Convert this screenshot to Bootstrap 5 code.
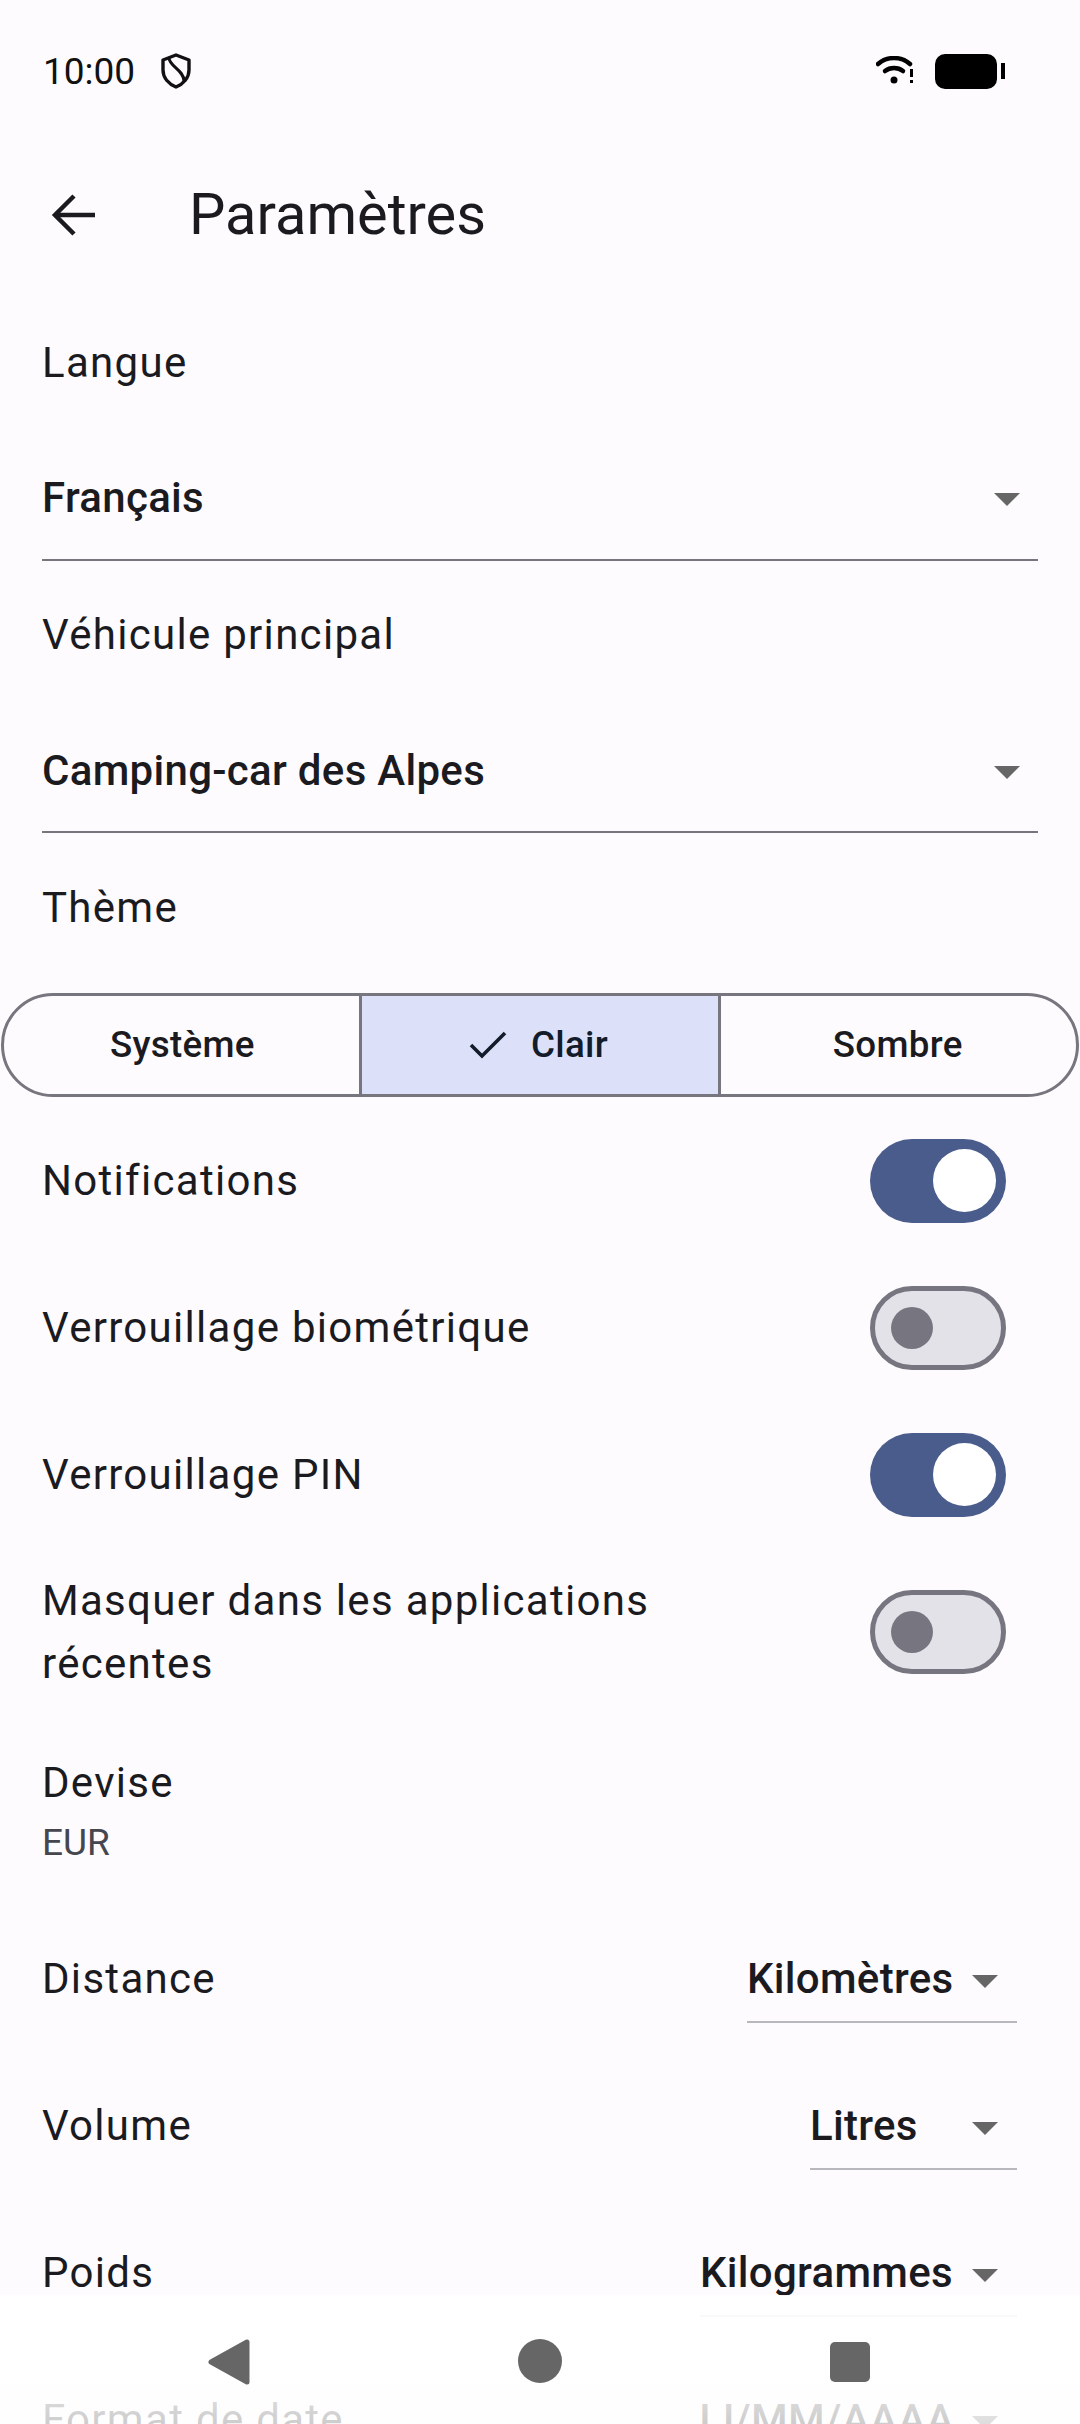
<!DOCTYPE html>
<html lang="fr">
<head>
  <meta charset="UTF-8">
  <title>Paramètres</title>
  <link href="https://cdn.jsdelivr.net/npm/bootstrap@5.3.0/dist/css/bootstrap.min.css" rel="stylesheet">
  <style>
    html, body { margin: 0; height: 2424px; overflow: hidden; }
    body { background: #fefbff; color: #1b1b1f; font-family: Roboto, "Noto Sans", sans-serif; }
    .phone { position: relative; width: 1080px; height: 2424px; overflow: hidden; }
    .status-bar { height: 140px; padding: 2px 75px 0 43px; }
    .status-time { font-size: 37px; line-height: 1; color: #111; }
    .shield-icon { margin-left: 25px; }
    .batt-icon { margin-left: 19px; }
    .app-bar { height: 147px; padding: 2px 0 0 51px; }
    .app-title { font-size: 57.75px; line-height: 1; margin: 0 0 0 92px; font-weight: 400; }
    .body-text { font-size: 42px; letter-spacing: 1.3px; line-height: 63px; }
    .side { padding: 0 43px 0 42px; }
    .dd-full { border-bottom: 2px solid #77767f; margin: 0 42px; }
    .dd-value { font-size: 42px; font-weight: 500; line-height: 1; letter-spacing: .3px; }
    .caret-down { width: 0; height: 0; border-left: 13px solid transparent; border-right: 13px solid transparent; border-top: 13px solid #666; }
    .dd-full .caret-down { margin-right: 18px; margin-top: 2px; }
    .h-lang { height: 150px; }
    .h-dd1 { height: 124px; }
    .h-veh { height: 147px; }
    .h-dd2 { height: 125px; padding-top: 3px; }
    .h-theme { height: 148px; }
    .seg-group { height: 104px; margin: 12px 1px 0; border: 3px solid #77767f; border-radius: 52px; overflow: hidden; }
    .seg-item { flex: 1 1 0; font-size: 36.75px; font-weight: 500; letter-spacing: .3px; line-height: 1; }
    .seg-on { background: #dce1f9; color: #131c2b; border-left: 3px solid #77767f; border-right: 3px solid #77767f; margin: 0 -2px; }
    .seg-check { margin-right: 24px; margin-left: -3px; }
    .set-list { padding-top: 10px; }
    .set-row { height: 147px; }
    .set-row-tall { height: 168px; }
    .toggle-box { width: 136px; height: 84px; border-radius: 42px; margin-right: 31px; flex: none; }
    .toggle-on { background: #4a5c8c; }
    .toggle-on span { width: 63px; height: 63px; border-radius: 50%; background: #fff; margin-right: 10px; }
    .toggle-off { background: #e3e2e9; border: 5px solid #777680; }
    .toggle-off span { width: 42px; height: 42px; border-radius: 50%; background: #777680; margin-left: 16px; }
    .wrap-label { width: 640px; }
    .devise-block { height: 189px; padding-top: 35px; }
    .sub-text { font-size: 37px; color: #46464f; line-height: 1; margin-top: 10px; }
    .unit-field { padding: 24px 0 21px 0; border-bottom: 2px solid #b8b7bd; margin-right: 20px; }
    .unit-km { width: 270px; }
    .unit-l { width: 207px; }
    .unit-kg { width: 317px; }
    .unit-date { width: 330px; }
    .unit-field .caret-down { margin: 5px 19px 0 auto; }
    .nav-fade { position: absolute; left: 0; right: 0; bottom: 0; height: 129px; background: linear-gradient(to bottom, rgba(255,255,255,.93) 0, rgba(255,255,255,.9) 60%, rgba(255,255,255,.78) 100%); }
    .nav-icons { position: absolute; left: 0; right: 0; top: 2338px; height: 72px; }
    .nav-slot { position: absolute; top: 0; }
    .nav-back { left: 207px; }
    .nav-home { left: 517px; }
    .nav-recent { left: 829px; top: 3px; }
  </style>
</head>
<body>
<div class="phone">
  <div class="status-bar d-flex align-items-center justify-content-between">
    <div class="d-flex align-items-center">
      <span class="status-time">10:00</span>
      <svg class="shield-icon" width="32" height="36" viewBox="0 0 32 36" fill="none" stroke="#111" stroke-width="3.4"><path d="M16 2 L29 7 V17 C29 25 23 31 16 34 C9 31 3 25 3 17 V7 Z" stroke-linejoin="round"/><path d="M9 5 C9 13 24 17 24 28" stroke-width="3"/></svg>
    </div>
    <div class="d-flex align-items-center">
      <svg width="40" height="30" viewBox="0 0 40 30" fill="none" stroke="#000" stroke-linecap="round"><path d="M2 8 C11 0 25 0 34 8" stroke-width="4.5"/><path d="M9 15 C14 11 22 11 27 15" stroke-width="4.5"/><circle cx="18" cy="24" r="3.5" fill="#000" stroke="none"/><path d="M35.500 13 V21" stroke-width="3" stroke-linecap="butt"/><rect x="34" y="24" width="3" height="3" fill="#000" stroke="none"/></svg>
      <svg class="batt-icon" width="70" height="36" viewBox="0 0 70 36"><rect x="0" y="1" width="62" height="35" rx="10" fill="#000"/><rect x="66" y="10" width="4" height="16" fill="#000"/></svg>
    </div>
  </div>

  <div class="app-bar d-flex align-items-center">
    <svg width="46" height="42" viewBox="0 0 46 42" fill="none" stroke="#1b1b1f" stroke-width="4.500"><path d="M44 21 H4"/><path d="M23 2 L4 21 L23 40"/></svg>
    <h1 class="app-title">Paramètres</h1>
  </div>

  <div class="side d-flex align-items-center body-text h-lang">Langue</div>
  <div class="dd-full h-dd1 d-flex align-items-center justify-content-between">
    <span class="dd-value">Français</span><span class="caret-down"></span>
  </div>
  <div class="side d-flex align-items-center body-text h-veh">Véhicule principal</div>
  <div class="dd-full h-dd2 d-flex align-items-center justify-content-between">
    <span class="dd-value">Camping-car des Alpes</span><span class="caret-down"></span>
  </div>
  <div class="side d-flex align-items-center body-text h-theme">Thème</div>

  <div class="seg-group d-flex">
    <div class="seg-item d-flex align-items-center justify-content-center">Système</div>
    <div class="seg-item seg-on d-flex align-items-center justify-content-center">
      <svg class="seg-check" width="38" height="30" viewBox="0 0 38 30" fill="none" stroke="#131c2b" stroke-width="3.600"><path d="M2 15 L13 26 L36 3"/></svg>Clair
    </div>
    <div class="seg-item d-flex align-items-center justify-content-center">Sombre</div>
  </div>

  <div class="side set-list">
    <div class="set-row d-flex align-items-center justify-content-between body-text">
      <span>Notifications</span>
      <div class="toggle-box toggle-on d-flex align-items-center justify-content-end"><span></span></div>
    </div>
    <div class="set-row d-flex align-items-center justify-content-between body-text">
      <span>Verrouillage biométrique</span>
      <div class="toggle-box toggle-off d-flex align-items-center"><span></span></div>
    </div>
    <div class="set-row d-flex align-items-center justify-content-between body-text">
      <span>Verrouillage PIN</span>
      <div class="toggle-box toggle-on d-flex align-items-center justify-content-end"><span></span></div>
    </div>
    <div class="set-row-tall d-flex align-items-center justify-content-between body-text">
      <span class="wrap-label">Masquer dans les applications récentes</span>
      <div class="toggle-box toggle-off d-flex align-items-center"><span></span></div>
    </div>
    <div class="devise-block d-flex flex-column">
      <span class="body-text">Devise</span>
      <span class="sub-text">EUR</span>
    </div>
    <div class="set-row d-flex align-items-center justify-content-between body-text">
      <span>Distance</span>
      <div class="unit-field unit-km d-flex align-items-center"><span class="dd-value">Kilomètres</span><span class="caret-down"></span></div>
    </div>
    <div class="set-row d-flex align-items-center justify-content-between body-text">
      <span>Volume</span>
      <div class="unit-field unit-l d-flex align-items-center"><span class="dd-value">Litres</span><span class="caret-down"></span></div>
    </div>
    <div class="set-row d-flex align-items-center justify-content-between body-text">
      <span>Poids</span>
      <div class="unit-field unit-kg d-flex align-items-center"><span class="dd-value">Kilogrammes</span><span class="caret-down"></span></div>
    </div>
    <div class="set-row d-flex align-items-center justify-content-between body-text">
      <span>Format de date</span>
      <div class="unit-field unit-date d-flex align-items-center"><span class="dd-value">JJ/MM/AAAA</span><span class="caret-down"></span></div>
    </div>
  </div>

  <div class="nav-fade"></div>
  <div class="nav-icons">
    <svg class="nav-slot nav-back" width="44" height="48" viewBox="0 0 44 48"><path d="M40 4 V44 L4 24 Z" fill="#666" stroke="#666" stroke-width="5" stroke-linejoin="round"/></svg>
    <svg class="nav-slot nav-home" width="46" height="46" viewBox="0 0 46 46"><circle cx="23" cy="23" r="22" fill="#666"/></svg>
    <svg class="nav-slot nav-recent" width="42" height="42" viewBox="0 0 42 42"><rect x="1" y="1" width="40" height="40" rx="5" fill="#666"/></svg>
  </div>
</div>
</body>
</html>
